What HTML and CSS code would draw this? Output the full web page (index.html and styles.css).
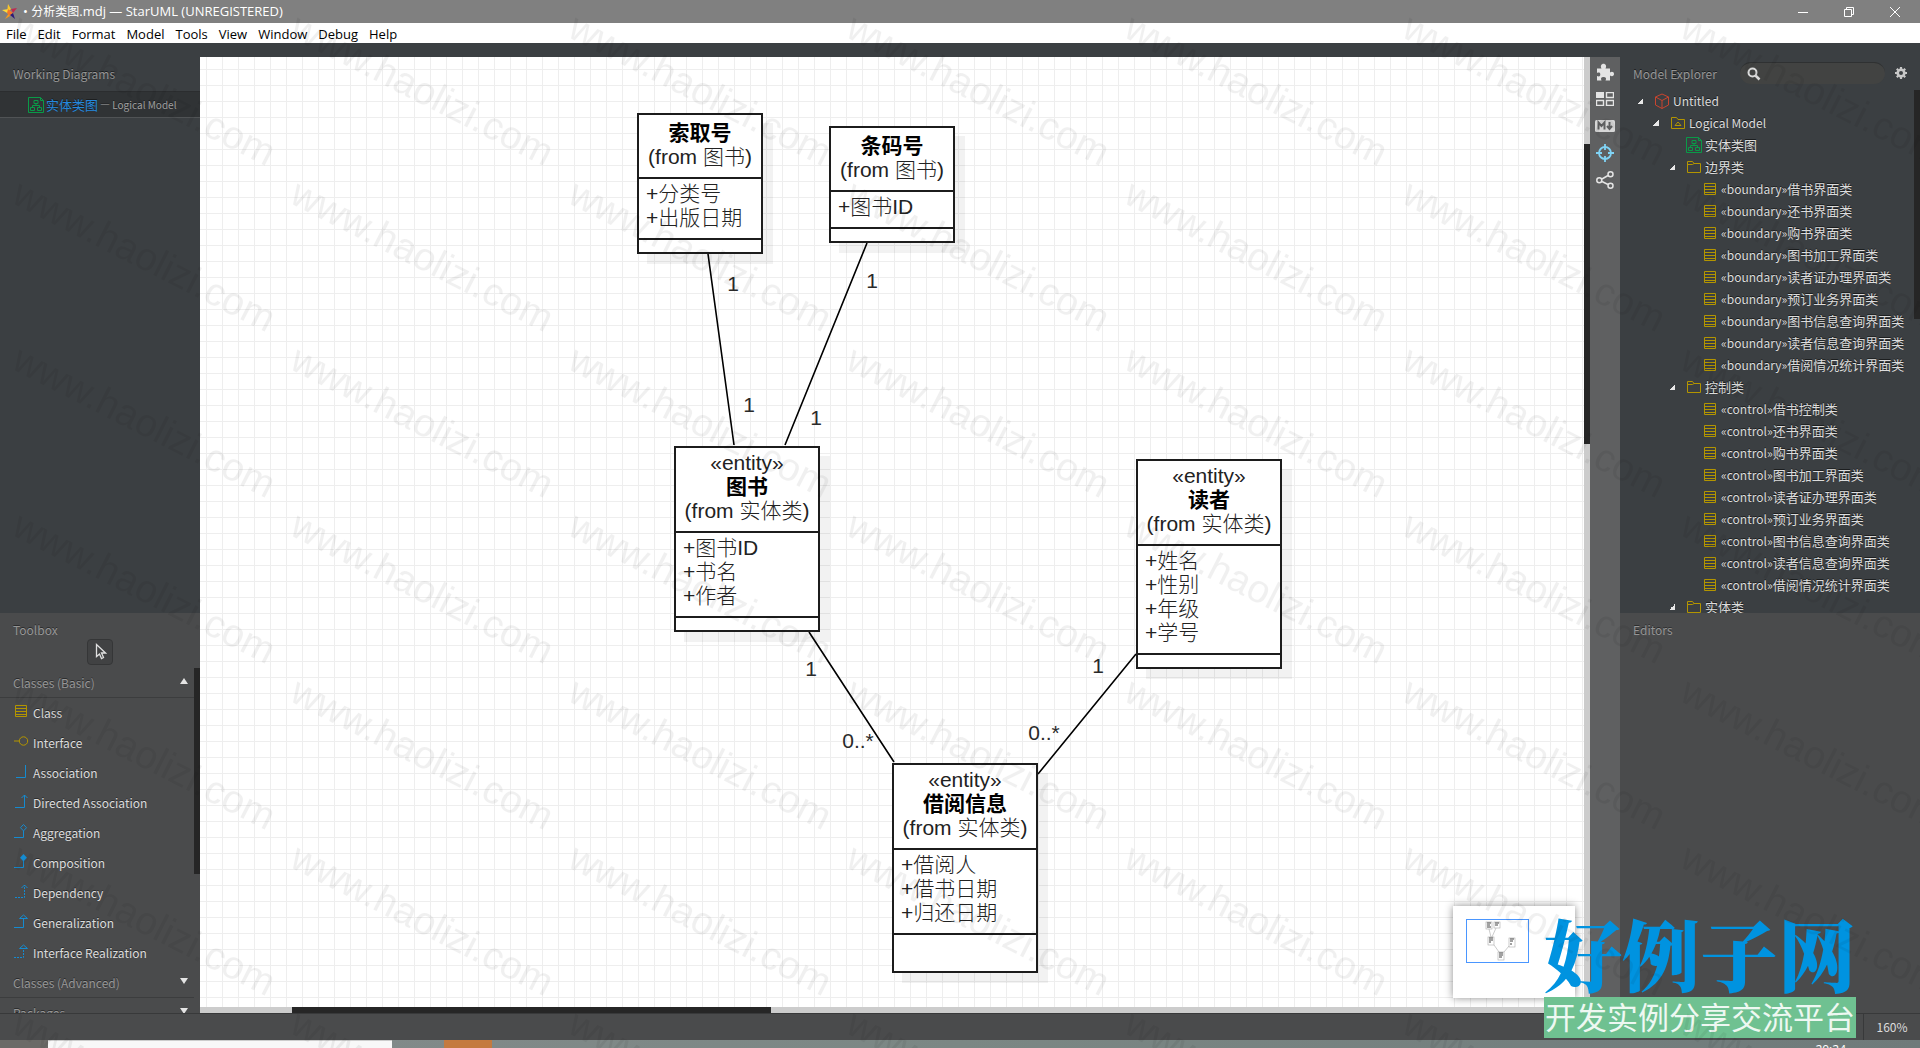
FILE: index.html
```html
<!DOCTYPE html>
<html lang="zh-CN">
<head>
<meta charset="utf-8">
<title>分析类图.mdj — StarUML</title>
<link rel="stylesheet" href="styles.css">
</head>
<body>
<svg class="sprite" aria-hidden="true">
  <symbol id="i-class" viewBox="0 0 16 16"><path d="M2.500 2.500h11v11h-11zM2.500 5.500h11M2.500 8.500h11M2.500 11.500h11" fill="none" stroke="currentColor"/></symbol>
  <symbol id="i-folder" viewBox="0 0 16 16"><path d="M1.500 13.500v-11h5l1.500 2h6.500v9zM1.500 5.500h5l1.500-1" fill="none" stroke="currentColor"/></symbol>
  <symbol id="i-model" viewBox="0 0 16 16"><path d="M1.500 13.500v-11h5l1.500 2h6.500v9zM5 10.500h6L8 7z" fill="none" stroke="currentColor"/></symbol>
  <symbol id="i-diagram" viewBox="0 0 16 16"><path d="M.5.500h12l3 3v12H.5zM12.500.500v3h3M6 3.500h4v3H6zM2.500 10.500h4v3h-4zM9.500 10.500h4v3h-4zM8 6.500v2M4.500 10.500v-2h7v2" fill="none" stroke="currentColor"/></symbol>
  <symbol id="i-cube" viewBox="0 0 16 16"><path d="M8 1l6.500 3v8L8 15.500 1.500 12V4zM1.500 4L8 7.500 14.500 4M8 7.500v8" fill="none" stroke="currentColor"/></symbol>
</svg>

<header class="titlebar">
  <svg class="star" viewBox="0 0 16 16" width="16" height="16"><path d="M6 0l3 5-4 4z" fill="#f8c62a"/><path d="M0 6l7-1v5z" fill="#ffd93a"/><path d="M9 5l6-1-4 5z" fill="#c0284f"/><path d="M7 9l-4 6 5-3z" fill="#f39a1f"/><path d="M6 5l5 4-3 3-3-3z" fill="#f4762a"/><path d="M8 11l3-2 2 6z" fill="#2c1a78"/></svg>
  <h1>• <span>分析类图</span>.mdj — StarUML (UNREGISTERED)</h1>
  <div class="winbtns">
    <button aria-label="Minimize"><svg width="12" height="12"><path d="M1 6.500h10" stroke="#fff"/></svg></button>
    <button aria-label="Restore"><svg width="12" height="12"><path d="M1.500 3.500h7v7h-7zM3.500 3.500v-2h7v7h-2" fill="none" stroke="#fff"/></svg></button>
    <button aria-label="Close"><svg width="12" height="12"><path d="M1 1l10 10M11 1L1 11" stroke="#fff"/></svg></button>
  </div>
</header>
<nav class="menubar">
  <button>File</button><button>Edit</button><button>Format</button><button>Model</button><button>Tools</button><button>View</button><button>Window</button><button>Debug</button><button>Help</button>
</nav>

<div class="workspace">
  <aside class="left">
    <section class="working">
      <h2 class="panel-title">Working Diagrams</h2>
      <div class="open-diagram"><svg class="ico green"><use href="#i-diagram"/></svg><span class="cjk">实体类图</span><small>— Logical Model</small></div>
    </section>
    <section class="toolbox">
      <h2 class="toolbox-title">Toolbox</h2>
      <button class="select-tool" aria-label="Select"><svg width="14" height="18"><path d="M3.500 1.500v12l3-2.500 2 4.500 2-1-2-4.500h4z" fill="none" stroke="#e0e0e0" stroke-width="1.300"/></svg></button>
      <div class="palette">
        <div class="groups">
          <h3>Classes (Basic)<span class="tri up"></span></h3>
          <ul>
            <li><svg class="ico gold"><use href="#i-class"/></svg>Class</li>
            <li><svg class="ico gold"><path d="M1 8h5" stroke="currentColor"/><circle cx="10.500" cy="8" r="4.200" fill="none" stroke="currentColor"/></svg>Interface</li>
            <li><svg class="ico blue"><path d="M3 14.500h9.500V2" fill="none" stroke="currentColor"/></svg>Association</li>
            <li><svg class="ico blue"><path d="M2 14.500h9.500V2M8.500 5l3-3 3 3" fill="none" stroke="currentColor"/></svg>Directed Association</li>
            <li><svg class="ico blue"><path d="M1 14.500h9.500V8M10.500 1.500l3 3.200-3 3.200-3-3.200z" fill="none" stroke="currentColor"/></svg>Aggregation</li>
            <li><svg class="ico blue"><path d="M1 14.500h9.500V8" fill="none" stroke="currentColor"/><path d="M10.500 1l3.500 3.700-3.500 3.700-3.500-3.700z" fill="currentColor"/></svg>Composition</li>
            <li><svg class="ico blue"><path d="M2 14.500h9.500V2" fill="none" stroke="currentColor" stroke-dasharray="2 1"/><path d="M8.500 5l3-3 3 3" fill="none" stroke="currentColor"/></svg>Dependency</li>
            <li><svg class="ico blue"><path d="M1 14.500h9.500V6M6.500 5.500h8l-4-3.500z" fill="none" stroke="currentColor"/></svg>Generalization</li>
            <li><svg class="ico blue"><path d="M1 14.500h9.500V6" fill="none" stroke="currentColor" stroke-dasharray="2 1"/><path d="M6.500 5.500h8l-4-3.500z" fill="none" stroke="currentColor"/></svg>Interface Realization</li>
          </ul>
          <h3>Classes (Advanced)<span class="tri down"></span></h3>
          <h3>Packages<span class="tri down"></span></h3>
        </div>
        <div class="thumb palette-thumb"></div>
      </div>
    </section>
  </aside>

  <main class="editor">
    <div class="canvas">
      <svg class="links">
        <path d="M508 197L534 388M667 186L585 388M609 575L694 705M936 597L838 717" fill="none" stroke="#000" stroke-width="1.600"/>
        <g class="mult">
          <text x="533" y="234">1</text><text x="672" y="231">1</text><text x="549" y="355">1</text><text x="616" y="368">1</text>
          <text x="611" y="619">1</text><text x="898" y="616">1</text><text x="658" y="691">0..*</text><text x="844" y="683">0..*</text>
        </g>
      </svg>
      <article class="uml n1"><header><b>索取号</b><p>(from 图书)</p></header><ul><li>+分类号</li><li>+出版日期</li></ul><div class="ops"></div></article>
      <article class="uml n2"><header><b>条码号</b><p>(from 图书)</p></header><ul><li>+图书ID</li></ul><div class="ops"></div></article>
      <article class="uml n3"><header><i>«entity»</i><b>图书</b><p>(from 实体类)</p></header><ul><li>+图书ID</li><li>+书名</li><li>+作者</li></ul><div class="ops"></div></article>
      <article class="uml n4"><header><i>«entity»</i><b>读者</b><p>(from 实体类)</p></header><ul><li>+姓名</li><li>+性别</li><li>+年级</li><li>+学号</li></ul><div class="ops"></div></article>
      <article class="uml n5"><header><i>«entity»</i><b>借阅信息</b><p>(from 实体类)</p></header><ul><li>+借阅人</li><li>+借书日期</li><li>+归还日期</li></ul><div class="ops tall"></div></article>
      <div class="minimap">
        <svg width="63" height="44" viewBox="0 0 63 44"><rect x=".5" y=".5" width="62" height="43" fill="#fff" stroke="#4a96ff"/><g fill="none" stroke="#aaa" stroke-width=".6"><rect x="20" y="3" width="6" height="7"/><rect x="28" y="3" width="6" height="6"/><rect x="22" y="18" width="6" height="8"/><rect x="43" y="19" width="6" height="9"/><rect x="32" y="33" width="6" height="8"/><path d="M23 10l2 8M30 9l-4 9M28 26l5 7M43 27l-5 6"/></g><path d="M21 4h4M21 6h3M21 8h4M29 4h4M29 6h3M23 19h4M23 21h4M23 23h2M44 20h4M44 22h3M44 25h2M33 34h4M33 36h4M33 38h3" stroke="#444"/></svg>
      </div>
    </div>
    <div class="vbar"><div class="thumb"></div></div>
    <div class="hbar"><div class="thumb"></div></div>
  </main>

  <nav class="strip">
    <button aria-label="Extensions"><svg width="18" height="18" viewBox="0 0 18 18"><path d="M1 5.500h4.500C4 3 5.500.800 7.500.800S11 3 9.500 5.500H14v4c2-1.300 4-.500 4 1.500s-2 2.800-4 1.500V17.500H9.500c1.200-2 .500-3.500-2-3.500s-3 1.500-2 3.500H1V13c2 1 3.300.500 3.300-1.500S3 9 1 10z" fill="#e4e4e4"/></svg></button>
    <button aria-label="Layout"><svg width="18" height="14"><path d="M0 0h8v6H0z" fill="#e4e4e4"/><path d="M10.500.500h7v5h-7zM.5 8.500h7v5h-7zM10.500 8.500h7v5h-7z" fill="none" stroke="#e4e4e4" stroke-width="1.400"/></svg></button>
    <button aria-label="Markdown"><svg width="20" height="12" viewBox="0 0 20 12"><rect width="20" height="12" rx="1.500" fill="#d6d6d6"/><path d="M3.500 9.500v-7l3 3.500 3-3.500v7M14.500 2v6M12 6l2.500 3L17 6" fill="none" stroke="#5f6061" stroke-width="2"/></svg></button>
    <button aria-label="Locate"><svg width="18" height="18"><circle cx="9" cy="9" r="6" fill="none" stroke="#80d3f5" stroke-width="1.800"/><path d="M9 0v6M9 12v6M0 9h6M12 9h6" stroke="#80d3f5" stroke-width="1.800"/></svg></button>
    <button aria-label="Relationships"><svg width="18" height="18"><path d="M6 8l6-3.500M6 10.500l6 3" stroke="#e4e4e4" stroke-width="1.500"/><g fill="none" stroke="#e4e4e4" stroke-width="1.500"><circle cx="3.300" cy="9.200" r="2.500"/><circle cx="14.500" cy="3.300" r="2.500"/><circle cx="14.500" cy="14.700" r="2.500"/></g></svg></button>
  </nav>

  <aside class="right">
    <section class="explorer">
      <div class="explorer-head">
        <h2>Model Explorer</h2>
        <label class="search"><svg width="14" height="14"><circle cx="5.500" cy="5.500" r="4" fill="none" stroke="#dcdcdc" stroke-width="2"/><path d="M8.500 8.500l4 4" stroke="#dcdcdc" stroke-width="2.500"/></svg><input type="text" aria-label="Search model"></label>
        <button class="gear" aria-label="Settings"><svg width="14" height="14" viewBox="0 0 14 14"><circle cx="7" cy="7" r="3.300" fill="none" stroke="#c8c8c8" stroke-width="2.600"/><path d="M7 1v2M7 11v2M1 7h2M11 7h2M2.800 2.800l1.400 1.400M9.800 9.800l1.400 1.400M11.200 2.800L9.800 4.200M2.800 11.200l1.400-1.400" stroke="#c8c8c8" stroke-width="2.200"/></svg></button>
      </div>
      <div class="tree-wrap">
      <ul class="tree">
        <li class="d0 open"><svg class="ico red"><use href="#i-cube"/></svg>Untitled</li>
        <li class="d1 open"><svg class="ico gold"><use href="#i-model"/></svg>Logical Model</li>
        <li class="d2"><svg class="ico green"><use href="#i-diagram"/></svg><span class="cjk">实体类图</span></li>
        <li class="d2 open"><svg class="ico gold"><use href="#i-folder"/></svg><span class="cjk">边界类</span></li>
        <li class="d3"><svg class="ico gold"><use href="#i-class"/></svg>«boundary»<span class="cjk">借书界面类</span></li>
        <li class="d3"><svg class="ico gold"><use href="#i-class"/></svg>«boundary»<span class="cjk">还书界面类</span></li>
        <li class="d3"><svg class="ico gold"><use href="#i-class"/></svg>«boundary»<span class="cjk">购书界面类</span></li>
        <li class="d3"><svg class="ico gold"><use href="#i-class"/></svg>«boundary»<span class="cjk">图书加工界面类</span></li>
        <li class="d3"><svg class="ico gold"><use href="#i-class"/></svg>«boundary»<span class="cjk">读者证办理界面类</span></li>
        <li class="d3"><svg class="ico gold"><use href="#i-class"/></svg>«boundary»<span class="cjk">预订业务界面类</span></li>
        <li class="d3"><svg class="ico gold"><use href="#i-class"/></svg>«boundary»<span class="cjk">图书信息查询界面类</span></li>
        <li class="d3"><svg class="ico gold"><use href="#i-class"/></svg>«boundary»<span class="cjk">读者信息查询界面类</span></li>
        <li class="d3"><svg class="ico gold"><use href="#i-class"/></svg>«boundary»<span class="cjk">借阅情况统计界面类</span></li>
        <li class="d2 open"><svg class="ico gold"><use href="#i-folder"/></svg><span class="cjk">控制类</span></li>
        <li class="d3"><svg class="ico gold"><use href="#i-class"/></svg>«control»<span class="cjk">借书控制类</span></li>
        <li class="d3"><svg class="ico gold"><use href="#i-class"/></svg>«control»<span class="cjk">还书界面类</span></li>
        <li class="d3"><svg class="ico gold"><use href="#i-class"/></svg>«control»<span class="cjk">购书界面类</span></li>
        <li class="d3"><svg class="ico gold"><use href="#i-class"/></svg>«control»<span class="cjk">图书加工界面类</span></li>
        <li class="d3"><svg class="ico gold"><use href="#i-class"/></svg>«control»<span class="cjk">读者证办理界面类</span></li>
        <li class="d3"><svg class="ico gold"><use href="#i-class"/></svg>«control»<span class="cjk">预订业务界面类</span></li>
        <li class="d3"><svg class="ico gold"><use href="#i-class"/></svg>«control»<span class="cjk">图书信息查询界面类</span></li>
        <li class="d3"><svg class="ico gold"><use href="#i-class"/></svg>«control»<span class="cjk">读者信息查询界面类</span></li>
        <li class="d3"><svg class="ico gold"><use href="#i-class"/></svg>«control»<span class="cjk">借阅情况统计界面类</span></li>
        <li class="d2 open"><svg class="ico gold"><use href="#i-folder"/></svg><span class="cjk">实体类</span></li>
      </ul>
      <div class="thumb tree-thumb"></div>
      </div>
    </section>
    <section class="editors"><h2 class="toolbox-title">Editors</h2></section>
  </aside>
</div>

<footer class="status"><span>160%</span></footer>
<div class="taskbar"><span class="desk"></span><span class="searchbox"></span><span class="tasks"></span><span class="app"></span><span class="clock">20:24</span></div>

<div class="brand"><strong>好例子网</strong><span>开发实例分享交流平台</span></div>
<svg class="watermark" aria-hidden="true">
  <defs><pattern id="wm" x="5" y="10" width="278" height="166" patternUnits="userSpaceOnUse"><text x="5" y="26" transform="rotate(27 5 26)">www.haolizi.com</text></pattern></defs>
  <rect width="100%" height="100%" fill="url(#wm)"/>
</svg>
</body>
</html>
```
FILE: styles.css
```css
* { box-sizing: border-box; }
body, h1, h2, h3, ul, p { margin: 0; padding: 0; }
ul { list-style: none; }
button { border: 0; padding: 0; background: none; font: inherit; color: inherit; }
body {
  height: 100vh;
  display: flex;
  flex-direction: column;
  overflow: hidden;
  background: #3b3f42;
  color: #dcdcdc;
  font: 400 12px/16px "Noto Sans CJK SC", sans-serif;
}
.sprite { position: absolute; width: 0; height: 0; }

/* window chrome */
.titlebar {
  flex: none;
  display: flex;
  align-items: center;
  height: 23px;
  padding: 0 2px;
  background: #808080;
  color: #fff;
}
.titlebar h1 {
  flex: 1;
  margin-left: 5px;
  font: 400 13px/20px "Open Sans", "Noto Sans CJK SC", sans-serif;
}
.titlebar h1 span { font-size: 12px; }
.winbtns { display: flex; }
.winbtns button { width: 46px; height: 20px; display: grid; place-items: center; }
.menubar {
  flex: none;
  display: flex;
  gap: 11px;
  height: 20px;
  padding: 1px 0 0 6px;
  background: #fff;
  color: #000;
  font: 400 13px/20px "Open Sans", sans-serif;
}

/* columns */
.workspace { flex: 1; min-height: 0; display: flex; padding-top: 14px; }
.left { flex: none; width: 200px; display: flex; flex-direction: column; }
.right { flex: none; width: 300px; display: flex; flex-direction: column; }
.working, .explorer { flex: 1; min-height: 0; text-shadow: 0 -1px 0 #1c1e1f; }
.toolbox, .editors {
  flex: none;
  height: 400px;
  background: #4a4b4c;
  text-shadow: 0 -1px 0 #2c2d2e;
}
h2, h3 { font-size: 12px; font-weight: 400; color: #969696; }
.panel-title { height: 34px; padding-left: 13px; line-height: 34px; }
.toolbox-title { padding: 9px 0 1px 13px; line-height: 16px; }
.cjk { font-size: 13px; }
.ico { flex: none; width: 16px; height: 16px; }
.gold { color: #b39500; }
.blue { color: #158bd0; }
.green { color: #0a9a48; }
.red { color: #c8452f; }
.thumb { background: #262626; }

.open-diagram {
  display: flex;
  align-items: center;
  height: 27px;
  padding-left: 28px;
  border-top: 1px solid #2b2d2f;
  border-bottom: 1px solid #505355;
  background: #303335;
  color: #2488dd;
}
.open-diagram .cjk { margin: 0 2px; }
.open-diagram small { font-size: 10px; color: #a0a0a0; }

/* toolbox */
.toolbox { display: flex; flex-direction: column; }
.select-tool {
  flex: none;
  display: grid;
  place-items: center;
  align-self: center;
  width: 26px;
  height: 26px;
  border: 1px solid #353637;
  border-radius: 4px;
  background: #414243;
}
.palette { flex: 1; min-height: 0; display: flex; margin-top: 3px; overflow: hidden; }
.groups { flex: 1; }
.palette-thumb { width: 6px; height: 206px; }
.groups h3 {
  display: flex;
  align-items: center;
  justify-content: space-between;
  height: 30px;
  padding: 0 6px 0 13px;
  border-bottom: 1px solid #3c3d3e;
}
.tri { margin-bottom: 3px; border: 4px solid transparent; border-top-width: 0; border-bottom: 6px solid #e4e4e4; }
.tri.down { border-bottom: 0; border-top: 6px solid #e4e4e4; }
.groups li { display: flex; align-items: center; gap: 4px; height: 30px; padding-left: 13px; }
.groups li .ico { margin-top: -4px; }

/* diagram editor */
.editor {
  flex: 1;
  min-width: 0;
  display: grid;
  grid-template: minmax(0, 1fr) 6px / minmax(0, 1fr) 6px;
  background: #ccc;
}
.canvas {
  position: relative;
  background:
    linear-gradient(90deg, #eee 1px, transparent 1px) 6px 0 / 16px 16px,
    linear-gradient(#eee 1px, transparent 1px) 0 12px / 16px 16px,
    #fff;
}
.vbar { padding-top: 87px; }
.vbar .thumb { height: 300px; }
.hbar { padding-left: 92px; }
.hbar .thumb { width: 479px; height: 6px; }
.links { position: absolute; width: 100%; height: 100%; }
.mult text { font: 21px "Liberation Sans", sans-serif; fill: #2a2a2a; text-anchor: middle; }
.uml {
  position: absolute;
  width: 146px;
  border: 2px solid #1c1c1c;
  background: #fff;
  box-shadow: 10px 10px 0 rgba(0, 0, 0, .05);
  color: #222;
  font: 300 21px/24px "Liberation Sans", "Noto Sans CJK SC", sans-serif;
  white-space: nowrap;
}
.uml header { padding: 6px 0 8px; text-align: center; }
.uml header i { display: block; height: 21px; line-height: 18px; font-style: normal; }
.uml header b { display: block; font-weight: 700; color: #000; }
.uml ul { padding: 3px 0 8px 7px; border-top: 2px solid #1c1c1c; }
.uml li, .uml p, .uml b { height: 24px; }
.ops { height: 14px; border-top: 2px solid #1c1c1c; }
.ops.tall { height: 38px; }
.n1 { left: 437px; top: 56px; width: 126px; }
.n2 { left: 629px; top: 69px; width: 126px; }
.n3 { left: 474px; top: 389px; }
.n4 { left: 936px; top: 402px; }
.n5 { left: 692px; top: 706px; }
.minimap {
  position: absolute;
  right: 9px;
  bottom: 9px;
  width: 122px;
  height: 92px;
  padding: 13px;
  background: #fff;
  box-shadow: 0 0 8px rgba(0, 0, 0, .45);
}

.strip {
  flex: none;
  width: 30px;
  padding-top: 1px;
  background: #5f6061;
}
.strip button { display: grid; place-items: center; width: 30px; height: 27px; }

/* model explorer */
.explorer { display: flex; flex-direction: column; }
.explorer-head { flex: none; display: flex; align-items: center; height: 33px; padding: 0 12px 1px 13px; }
.explorer-head h2 { flex: 1; padding-top: 2px; }
.search {
  display: flex;
  align-items: center;
  width: 145px;
  height: 22px;
  margin-right: 9px;
  padding-left: 7px;
  border-radius: 11px;
  border-top: 1px solid #2f3132;
  background: #424342;
}
.search input { width: 110px; border: 0; background: none; color: #ddd; font: inherit; }
.gear { display: grid; place-items: center; width: 14px; height: 14px; }
.tree-wrap { flex: 1; min-height: 0; display: flex; overflow: hidden; }
.tree { flex: 1; min-width: 0; }
.tree-thumb { width: 6px; height: 229px; }
.tree li { display: flex; align-items: center; height: 22px; white-space: nowrap; }
.tree li::before {
  content: "";
  flex: none;
  width: 6px;
  height: 6px;
  margin: 0 11px 0 5px;
}
.tree li.open::before { background: linear-gradient(135deg, transparent 50%, #e8e8e8 50%); }
.tree .ico { margin-right: 3px; }
.d0 { padding-left: 12px; }
.d1 { padding-left: 28px; }
.d2 { padding-left: 44px; }
.d3 { padding-left: 60px; }

/* bottom bars */
.status {
  flex: none;
  display: flex;
  justify-content: flex-end;
  height: 27px;
  border-top: 1px solid #38393a;
  background: #4a4b4c;
}
.status span { width: 57px; border-left: 1px solid #38393a; text-align: center; line-height: 26px; }
.taskbar { flex: none; display: flex; height: 8px; overflow: hidden; background: linear-gradient(90deg, #858b8c, #7b8784 50%, #6f7a7a); }
.desk { width: 48px; background: #6b6a67; }
.searchbox { width: 344px; border-top: 1px solid #ccc; background: #f8f8f8; }
.tasks { width: 52px; }
.app { width: 48px; background: #c47a3f; }
.clock { margin-left: auto; margin-right: 74px; padding-top: 2px; color: #fff; font: 12px/16px "Open Sans", sans-serif; }

/* site stamp and page watermark, above everything */
.brand {
  position: absolute;
  right: 64px;
  bottom: 10px;
  width: 312px;
  text-align: center;
  white-space: nowrap;
}
.brand strong {
  display: block;
  height: 80px;
  color: #0093e0;
  font: 900 78px/70px "Noto Serif CJK SC", "Noto Sans CJK SC", serif;
}
.brand span {
  display: block;
  height: 41px;
  background: #6fc191;
  color: #eef8f2;
  font: 400 31px/38px "Noto Sans CJK SC", sans-serif;
}
.watermark { position: absolute; top: 0; left: 0; width: 100%; height: 100%; pointer-events: none; }
.watermark text { font: 39px "Liberation Sans", sans-serif; fill: #000; fill-opacity: .06; }
```
